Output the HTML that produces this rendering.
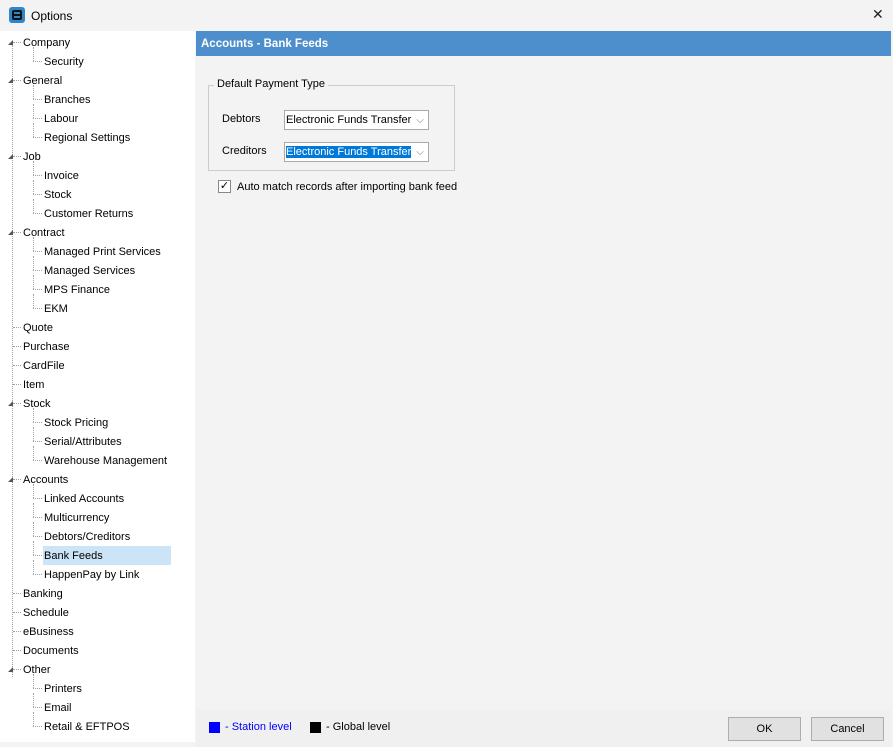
<!DOCTYPE html>
<html><head><style>
body{margin:0;width:893px;height:747px;overflow:hidden;background:#f3f3f3;font-family:"Liberation Sans",Tahoma,sans-serif;font-size:11px;color:#000;position:relative}
.a{position:absolute}
.row{position:absolute;height:19px;line-height:20px;white-space:nowrap}
.hl{position:absolute;border-top:1px dotted #a0a0a0;height:0}
.vl{position:absolute;border-left:1px dotted #a0a0a0;width:0}
.tri{position:absolute;width:0;height:0;border-left:5px solid transparent;border-bottom:5px solid #555}
.combo{position:absolute;left:284px;width:145px;height:20px;background:#fff;border:1px solid #aaa;box-sizing:border-box;line-height:18px;padding-left:1px}
.combo .ar{position:absolute;right:4px;top:1px;color:#777;font-size:10px}
.btn{position:absolute;top:717px;width:73px;height:24px;border:1px solid #adadad;background:#e1e1e1;box-sizing:border-box;text-align:center;line-height:22px;font-size:11px}
</style></head><body>
<div class="a" style="left:0;top:0;width:893px;height:31px;background:#f3f3f3"></div>
<div class="a" style="left:9px;top:7px;width:16px;height:16px;background:#2f86c9;border-radius:3px"><div class="a" style="left:3px;top:3px;width:10px;height:10px;background:#111;border-radius:2px"></div><div class="a" style="left:5px;top:5px;width:6px;height:2px;background:#2f86c9"></div><div class="a" style="left:5px;top:9px;width:6px;height:2px;background:#2f86c9"></div></div>
<div class="a" style="left:31px;top:9px;font-size:12px">Options</div>
<div class="a" style="left:872px;top:6px;font-size:14px;color:#222">✕</div>
<div class="a" style="left:0;top:31px;width:195px;height:711px;background:#fff"></div>
<div class="a" style="left:196px;top:31px;width:695px;height:25px;background:#4d8fcc"></div>
<div class="a" style="left:201px;top:38px;color:#fff;font-weight:bold;font-size:11.5px">Accounts - Bank Feeds</div>
<div class="a" style="left:208px;top:85px;width:245px;height:84px;border:1px solid #ccc"></div>
<div class="a" style="left:214px;top:78px;background:#f3f3f3;padding:0 3px">Default Payment Type</div>
<div class="a" style="left:222px;top:113px">Debtors</div>
<div class="a" style="left:222px;top:145px">Creditors</div>
<div class="combo" style="top:110px">Electronic Funds Transfer<span class="ar">⌵</span></div>
<div class="combo" style="top:142px"><span style="background:#0078d7;color:#fff">Electronic Funds Transfer</span><span class="ar">⌵</span></div>
<div class="a" style="left:218px;top:180px;width:13px;height:13px;border:1px solid #888;background:#fff;box-sizing:border-box;font-size:11px;line-height:11px;text-align:center">✓</div>
<div class="a" style="left:237px;top:181px">Auto match records after importing bank feed</div>
<div class="a" style="left:196px;top:710px;width:695px;height:37px;background:#f0f0f0"></div>
<div class="a" style="left:209px;top:722px;width:11px;height:11px;background:#00f"></div>
<div class="a" style="left:225px;top:721px;color:#00f">- Station level</div>
<div class="a" style="left:310px;top:722px;width:11px;height:11px;background:#000"></div>
<div class="a" style="left:326px;top:721px">- Global level</div>
<div class="btn" style="left:728px">OK</div>
<div class="btn" style="left:811px">Cancel</div>
<div class="vl" style="left:12px;top:45px;height:632px"></div>
<div id="tree"></div>
<script>
var items=[[0,"Company",1],[1,"Security"],[0,"General",1],[1,"Branches"],[1,"Labour"],[1,"Regional Settings"],[0,"Job",1],[1,"Invoice"],[1,"Stock"],[1,"Customer Returns"],[0,"Contract",1],[1,"Managed Print Services"],[1,"Managed Services"],[1,"MPS Finance"],[1,"EKM"],[0,"Quote"],[0,"Purchase"],[0,"CardFile"],[0,"Item"],[0,"Stock",1],[1,"Stock Pricing"],[1,"Serial/Attributes"],[1,"Warehouse Management"],[0,"Accounts",1],[1,"Linked Accounts"],[1,"Multicurrency"],[1,"Debtors/Creditors"],[1,"Bank Feeds"],[1,"HappenPay by Link"],[0,"Banking"],[0,"Schedule"],[0,"eBusiness"],[0,"Documents"],[0,"Other",1],[1,"Printers"],[1,"Email"],[1,"Retail & EFTPOS"]];
var h="";
items.forEach(function(it,i){var cy=42+19*i,top=cy-9;
if(it[0]==0){h+='<div class="hl" style="left:13px;top:'+cy+'px;width:8px"></div>';
 if(it[2]){h+='<div class="tri" style="left:8px;top:'+(cy-2)+'px"></div>';}
 h+='<div class="row" style="left:23px;top:'+top+'px">'+it[1].replace("&","&amp;")+'</div>';}
else{h+='<div class="vl" style="left:33px;top:'+(cy-14)+'px;height:14px"></div><div class="hl" style="left:33px;top:'+cy+'px;width:9px"></div>';
 var bg=it[1]=="Bank Feeds"?'background:#cce4f7;width:127px;':'';
 h+='<div class="row" style="left:43px;padding-left:1px;top:'+top+'px;'+bg+'">'+it[1].replace("&","&amp;")+'</div>';}
});
document.getElementById("tree").innerHTML=h;
</script>
</body></html>
